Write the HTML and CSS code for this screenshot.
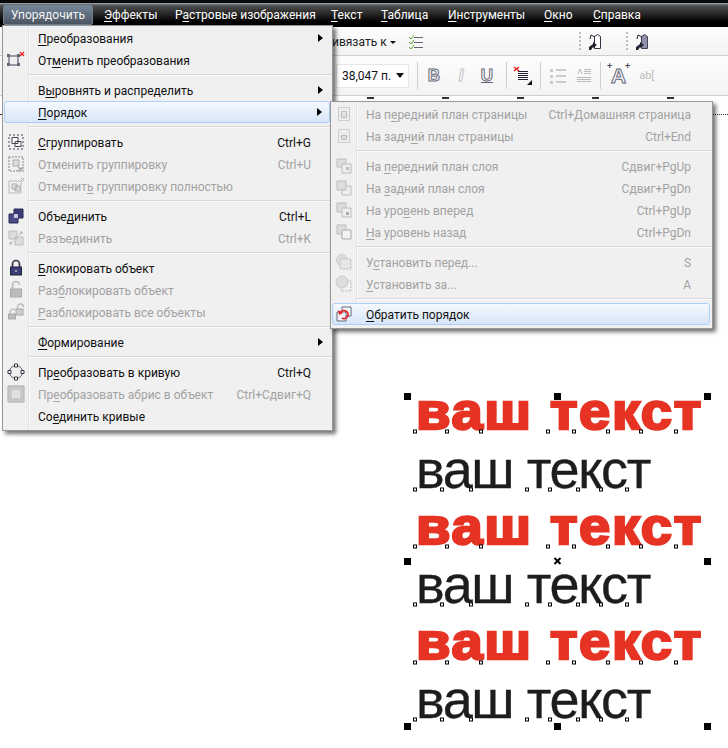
FILE: index.html
```html
<!DOCTYPE html>
<html lang="ru">
<head>
  <meta charset="UTF-8">
  <title>Упорядочить</title>
  <link rel="stylesheet" href="styles.css">
</head>
<body>
  <div class="page">
    <nav class="menubar">
      <span class="bar-item active">Упорядочить</span>
      <span class="bar-item effects"><u>Э</u>ффекты</span>
      <span class="bar-item bitmaps">Р<u>а</u>стровые изображения</span>
      <span class="bar-item text"><u>Т</u>екст</span>
      <span class="bar-item table"><u>Т</u>аблица</span>
      <span class="bar-item tools"><u>И</u>нструменты</span>
      <span class="bar-item window"><u>О</u>кно</span>
      <span class="bar-item help"><u>С</u>правка</span>
    </nav>

    <div class="toolbar top">
      <span class="snap">ивязать к</span>
      <span class="drop small"></span>
      <svg class="check-ico" width="16" height="16" viewBox="0 0 16 16"><path d="M6 3.500h9M6 8.500h9M6 13.500h9" stroke="#667" fill="none"/><path d="M1 3l2 2 3-4M1 8l2 2 3-4M1 13l2 2 3-4" stroke="#5a3" fill="none"/></svg>
      <span class="dots first"></span>
      <svg class="tag-ico" width="16" height="18" viewBox="0 0 16 18"><path d="M6.500 3.500l3-2 3 2v12h-6z" fill="#fff" stroke="#334"/><path d="M1 17v-3l4-3V9l4 3-4 3v-1l-2 3z" fill="#223"/><path d="M2 6l1-4 4 2" fill="none" stroke="#223"/></svg>
      <span class="dots"></span>
      <svg class="tag-ico" width="16" height="18" viewBox="0 0 16 18"><path d="M6.500 3.500l3-2 3 2v12h-6z" fill="#8f8fa8" stroke="#445"/><path d="M1 17v-3l4-3V9l4 3-4 3v-1l-2 3z" fill="#223"/><path d="M2 6l1-4 4 2" fill="none" stroke="#223"/></svg>
    </div>

    <div class="toolbar second">
      <div class="size-box"><span>38,047 п.</span><span class="drop"></span></div>
      <span class="tb-sep"></span>
      <span class="style-btn">B</span>
      <span class="style-btn off slant">I</span>
      <span class="style-btn under">U</span>
      <span class="tb-sep"></span>
      <svg class="align-ico" width="20" height="20" viewBox="0 0 20 20"><path d="M5 5.500h10M5 7.500h10M5 9.500h10M5 11.500h10M5 13.500h10" stroke="#223"/><path d="M1 1l5 4M6 1L1 5" stroke="#e22" stroke-width="1.600"/><path d="M19 19h-5l5-5z" fill="#111"/></svg>
      <span class="tb-sep"></span>
      <svg class="list-ico" width="18" height="16" viewBox="0 0 18 16"><path d="M7 2h10M7 8h10M7 14h10" stroke="#ccc" stroke-width="2"/><path d="M1 1h3v3H1zM1 7h3v3H1zM1 13h3v3H1z" fill="#ccc"/></svg>
      <svg class="list-ico next" width="14" height="16" viewBox="0 0 14 16"><path d="M0 9.500h14M0 11.500h14M0 13.500h14M7 1.500h7M7 3.500h7M7 5.500h7" stroke="#bbb"/><path d="M1 6l2-5 2 5" fill="none" stroke="#bbb"/></svg>
      <span class="tb-sep"></span>
      <span class="big-a">A</span>
      <span class="ab-tool">ab[</span>
    </div>

    <div class="ruler">
      <i></i><i></i><i></i><i></i><i></i>
    </div>

    <main class="canvas">
      <p class="line heavy">ваш текст</p>
      <p class="line thin">ваш текст</p>
      <p class="line heavy">ваш текст</p>
      <p class="line thin">ваш текст</p>
      <p class="line heavy">ваш текст</p>
      <p class="line thin">ваш текст</p>

      <svg class="handles" width="728" height="633" viewBox="0 115 728 633">
        <defs>
          <rect id="h" x="-3.500" y="-3.500" width="7" height="7" fill="#000"/>
          <rect id="n" x="-1.500" y="-1.500" width="3" height="3" fill="#fff" stroke="#000"/>
          <g id="nodes-heavy">
            <use href="#n" x="415"/><use href="#n" x="447"/><use href="#n" x="481"/><use href="#n" x="548"/>
            <use href="#n" x="574"/><use href="#n" x="608"/><use href="#n" x="641"/><use href="#n" x="676"/>
          </g>
          <g id="nodes-thin">
            <use href="#n" x="415"/><use href="#n" x="442"/><use href="#n" x="471"/><use href="#n" x="527"/>
            <use href="#n" x="550"/><use href="#n" x="578"/><use href="#n" x="601"/><use href="#n" x="627"/>
          </g>
        </defs>
        <use href="#h" x="407.500" y="396.500"/><use href="#h" x="557.500" y="396.500"/><use href="#h" x="707.500" y="396.500"/>
        <use href="#h" x="407.500" y="561.500"/><use href="#h" x="707.500" y="561.500"/>
        <use href="#h" x="407.500" y="726.500"/><use href="#h" x="557.500" y="726.500"/><use href="#h" x="707.500" y="726.500"/>
        <path d="M554.500 558l6 6M560.500 558l-6 6" stroke="#000" stroke-width="2"/>
        <use href="#nodes-heavy" y="431.500"/>
        <use href="#nodes-thin" y="489.500"/>
        <use href="#nodes-heavy" y="546.500"/>
        <use href="#nodes-thin" y="604.500"/>
        <use href="#nodes-heavy" y="662.500"/>
        <use href="#nodes-thin" y="719.500"/>
      </svg>
    </main>

    <!-- main menu -->
    <div class="menu main-menu">
      <div class="row"><span class="gutter"></span><span class="label"><u>П</u>реобразования</span><span class="arrow"></span></div>
      <div class="row"><span class="gutter">
        <svg width="20" height="18" viewBox="0 0 20 18"><path d="M3 5h9M3 14h9M3 5v9M12 5v9" stroke="#445" fill="none"/><path d="M1 3h3v3H1zM11 12h3v3h-3zM1 12h3v3H1zM11 3h3v3h-3z" fill="#667"/><path d="M14 1l4 4M18 1l-4 4" stroke="#e22" stroke-width="1.300"/></svg>
      </span><span class="label">От<u>м</u>енить преобразования</span></div>
      <div class="sep"></div>
      <div class="row"><span class="gutter"></span><span class="label">В<u>ы</u>ровнять и распределить</span><span class="arrow"></span></div>
      <div class="row hot"><span class="gutter"></span><span class="label"><u>П</u>орядок</span><span class="arrow"></span></div>
      <div class="sep"></div>
      <div class="row"><span class="gutter">
        <svg width="18" height="18" viewBox="0 0 18 18"><path d="M2 2h14v14H2z" fill="none" stroke="#445" stroke-dasharray="2 2"/><path d="M5 4.500h6v6H5zM8 8.500h6v5H8z" fill="#fff" stroke="#445"/></svg>
      </span><span class="label"><u>С</u>группировать</span><span class="short">Ctrl+G</span></div>
      <div class="row off"><span class="gutter">
        <svg width="18" height="18" viewBox="0 0 18 18"><path d="M2 2h14v14H2z" fill="none" stroke="#aaa" stroke-width="1.500" stroke-dasharray="2 1"/><path d="M6 5h6v6H6z" fill="#ddd" stroke="#aaa"/><path d="M11 12l5 4M16 12l-5 4" stroke="#aaa" stroke-width="1.500"/></svg>
      </span><span class="label">О<u>т</u>менить группировку</span><span class="short">Ctrl+U</span></div>
      <div class="row off"><span class="gutter">
        <svg width="18" height="18" viewBox="0 0 18 18"><path d="M2 4h12v12H2z" fill="none" stroke="#bbb"/><path d="M5 7h5v5H5zM8 9h5v5H8z" fill="#e4e4e4" stroke="#aaa"/><path d="M14 1l3 3M17 1l-3 3" stroke="#aaa"/></svg>
      </span><span class="label">Отменит<u>ь</u> группировку полностью</span></div>
      <div class="sep"></div>
      <div class="row"><span class="gutter">
        <svg width="18" height="18" viewBox="0 0 18 18"><path d="M7 2h9v9H7z" fill="#3c3c78" stroke="#2a2a55"/><path d="M2 7h9v9H2z" fill="#4a4a88" stroke="#2a2a55"/><path d="M7 7h4v4H7z" fill="#c8c8e0"/></svg>
      </span><span class="label">Объе<u>д</u>инить</span><span class="short">Ctrl+L</span></div>
      <div class="row off"><span class="gutter">
        <svg width="18" height="18" viewBox="0 0 18 18"><path d="M2 2h8v8H2zM8 8h8v8H8z" fill="#ddd" stroke="#bbb"/><path d="M12 6l3-3M13 3h2v2M6 12l-3 3M3 13v2h2" fill="none" stroke="#aaa"/></svg>
      </span><span class="label">Разъединить</span><span class="short">Ctrl+K</span></div>
      <div class="sep"></div>
      <div class="row"><span class="gutter">
        <svg width="16" height="18" viewBox="0 0 16 18"><path d="M4.500 8V5a3.500 3.500 0 0 1 7 0v3" fill="none" stroke="#334" stroke-width="1.700"/><rect x="2.500" y="8" width="11" height="8" fill="#3c3c78" stroke="#223"/><path d="M7 11h2v2H7z" fill="#99a"/></svg>
      </span><span class="label"><u>Б</u>локировать объект</span></div>
      <div class="row off"><span class="gutter">
        <svg width="16" height="18" viewBox="0 0 16 18"><path d="M4.500 8V4a3.500 3.500 0 0 1 7 0" fill="none" stroke="#bbb" stroke-width="1.700"/><rect x="2.500" y="8" width="11" height="8" fill="#bbb" stroke="#aaa"/></svg>
      </span><span class="label">Раз<u>б</u>локировать объект</span></div>
      <div class="row off"><span class="gutter">
        <svg width="18" height="18" viewBox="0 0 18 18"><path d="M10.500 6V4a3 3 0 0 1 6 0" fill="none" stroke="#bbb" stroke-width="1.300"/><rect x="9" y="6" width="7" height="6" fill="#ccc" stroke="#aaa"/><path d="M3 11V9a3 3 0 0 1 5-2" fill="none" stroke="#bbb" stroke-width="1.300"/><rect x="1.500" y="11" width="7" height="5" fill="#bbb" stroke="#aaa"/></svg>
      </span><span class="label"><u>Р</u>азблокировать все объекты</span></div>
      <div class="sep"></div>
      <div class="row"><span class="gutter"></span><span class="label"><u>Ф</u>ормирование</span><span class="arrow"></span></div>
      <div class="sep"></div>
      <div class="row"><span class="gutter">
        <svg width="18" height="18" viewBox="0 0 18 18"><circle cx="9" cy="9" r="6.500" fill="none" stroke="#556"/><path d="M7.500 1h3v3h-3zM7.500 14h3v3h-3zM1 7.500h3v3H1zM14 7.500h3v3h-3z" fill="#fff" stroke="#334"/></svg>
      </span><span class="label">Пр<u>е</u>образовать в кривую</span><span class="short">Ctrl+Q</span></div>
      <div class="row off"><span class="gutter">
        <svg width="18" height="18" viewBox="0 0 18 18"><path d="M1 1h16v16H1z" fill="#ccc" stroke="#aaa"/><path d="M4 4h10v10H4z" fill="#e0e0e0" stroke="#bbb"/></svg>
      </span><span class="label">Пр<u>е</u>образовать абрис в объект</span><span class="short">Ctrl+Сдвиг+Q</span></div>
      <div class="row"><span class="gutter"></span><span class="label">Со<u>е</u>динить кривые</span></div>
    </div>

    <!-- Порядок submenu -->
    <div class="menu sub-menu">
      <div class="row off"><span class="gutter">
        <svg width="14" height="16" viewBox="0 0 14 16"><path d="M1.500 1.500h11v13h-11z" fill="#eee" stroke="#ccc"/><path d="M4.500 5.500h5v6h-5z" fill="#e4e4e4" stroke="#bbb"/></svg>
      </span><span class="label">На п<u>е</u>редний план страницы</span><span class="short">Ctrl+Домашняя страница</span></div>
      <div class="row off"><span class="gutter">
        <svg width="14" height="16" viewBox="0 0 14 16"><path d="M1.500 1.500h11v13h-11z" fill="#eee" stroke="#ccc"/><path d="M4.500 7.500h5v4h-5z" fill="#ddd" stroke="#bbb"/></svg>
      </span><span class="label">На задн<u>и</u>й план страницы</span><span class="short">Ctrl+End</span></div>
      <div class="sep"></div>
      <div class="row off"><span class="gutter">
        <svg width="16" height="16" viewBox="0 0 16 16"><path d="M1 1h9v8H1z" fill="#ddd" stroke="#bbb"/><path d="M6 6h9v9H6z" fill="#eee" stroke="#bbb"/><path d="M10 9h3v3h-3z" fill="#bbb"/></svg>
      </span><span class="label">На <u>п</u>ередний план слоя</span><span class="short">Сдвиг+PgUp</span></div>
      <div class="row off"><span class="gutter">
        <svg width="16" height="16" viewBox="0 0 16 16"><path d="M6 6h9v9H6z" fill="#eee" stroke="#bbb"/><path d="M1 1h9v9H1z" fill="#ddd" stroke="#bbb"/></svg>
      </span><span class="label">На <u>з</u>адний план слоя</span><span class="short">Сдвиг+PgDn</span></div>
      <div class="row off"><span class="gutter">
        <svg width="16" height="16" viewBox="0 0 16 16"><path d="M1 1h9v9H1z" fill="#ddd" stroke="#bbb"/><path d="M6 6h9v9H6z" fill="#eee" stroke="#bbb"/><path d="M10 10h3v3h-3z" fill="#aaa"/></svg>
      </span><span class="label">На уро<u>в</u>ень вперед</span><span class="short">Ctrl+PgUp</span></div>
      <div class="row off"><span class="gutter">
        <svg width="16" height="16" viewBox="0 0 16 16"><path d="M1 1h9v9H1z" fill="#ddd" stroke="#bbb"/><path d="M6 6h9v9H6z" fill="#f2f2f2" stroke="#aaa"/></svg>
      </span><span class="label"><u>Н</u>а уровень назад</span><span class="short">Ctrl+PgDn</span></div>
      <div class="sep"></div>
      <div class="row off"><span class="gutter">
        <svg width="18" height="18" viewBox="0 0 18 18"><circle cx="7" cy="7" r="5.500" fill="#ddd" stroke="#ccc"/><path d="M5 6h11v10H5z" fill="#e6e6e6" stroke="#bbb" stroke-dasharray="2 1"/></svg>
      </span><span class="label">У<u>с</u>тановить перед...</span><span class="short">S</span></div>
      <div class="row off"><span class="gutter">
        <svg width="18" height="18" viewBox="0 0 18 18"><path d="M6 6h10v10H6z" fill="none" stroke="#bbb" stroke-dasharray="2 1"/><circle cx="7" cy="7" r="6" fill="#ddd" stroke="#ccc"/></svg>
      </span><span class="label"><u>У</u>становить за...</span><span class="short">A</span></div>
      <div class="sep"></div>
      <div class="row hot"><span class="gutter">
        <svg width="18" height="18" viewBox="0 0 18 18"><path d="M7 2h9v9H7z" fill="#f4f7fb" stroke="#667"/><path d="M2 7h9v9H2z" fill="#eef2f8" stroke="#667"/><path d="M6 7a4 4 0 1 1 1 6" fill="none" stroke="#e22" stroke-width="1.800"/><path d="M3 5l1 5 4-2z" fill="#e22"/></svg>
      </span><span class="label"><u>О</u>братить порядок</span></div>
    </div>
  </div>
</body>
</html>
```

FILE: styles.css
```css
* {
  box-sizing: border-box;
}

body {
  margin: 0;
  background: #fff;
  font-family: Roboto, "Open Sans", "Liberation Sans", sans-serif;
  font-size: 12px;
}

.page {
  position: relative;
  width: 728px;
  height: 748px;
  overflow: hidden;
}

u {
  text-underline-offset: 2px;
}

/* menu bar */
.menubar {
  display: flex;
  height: 27px;
  padding: 5px 0 2px 3px;
  color: #fff;
  background: linear-gradient(#0a0a0a 0, #0a0a0a 3px, #9fb0ba 3px, #7b8085 4px, #4c4c4c 6px, #000 22px);
}

.bar-item {
  line-height: 20px;
  white-space: nowrap;
}

.bar-item.active {
  width: 90px;
  text-align: center;
  border: 1px solid #6f7f8c;
  border-radius: 2px;
  line-height: 18px;
  color: #f4f4f4;
  background: linear-gradient(#75879a, #4a5561);
}

.effects { margin-left: 11px; width: 71px; }
.bitmaps { width: 156px; }
.text { width: 50px; }
.table { width: 67px; }
.tools { width: 96px; }
.window { width: 49px; }

/* toolbars */
.toolbar {
  display: flex;
  align-items: center;
  background: linear-gradient(#fdfdfd, #f3f3f3);
  border-bottom: 1px solid #cfcfcf;
}

.toolbar.top {
  height: 29px;
  padding-left: 332px;
  padding-top: 2px;
}

.toolbar.second {
  height: 40px;
  padding-left: 336px;
}

.snap {
  flex: none;
  color: #222;
  width: 52px;
  white-space: nowrap;
}

.drop {
  display: inline-block;
  border: 4px solid transparent;
  border-top: 5px solid #111;
  border-bottom: 0;
  margin-left: 5px;
}

.drop.small {
  border-width: 3px 3px 0;
  margin-left: 6px;
}

.check-ico { margin-left: 12px; }

.dots {
  width: 2px;
  height: 20px;
  margin-left: 22px;
  margin-right: 7px;
  background: repeating-linear-gradient(#bbb 0 2px, transparent 2px 4px);
}

.dots.first { margin-left: 155px; }

.size-box {
  display: flex;
  align-items: center;
  justify-content: space-between;
  width: 73px;
  height: 24px;
  padding: 0 4px 0 5px;
  background: #fff;
  border: 1px solid #e6e6e6;
  color: #111;
  white-space: nowrap;
}

.tb-sep {
  width: 1px;
  height: 27px;
  background: #cfcfcf;
}

.size-box + .tb-sep { margin-left: 8px; }

.style-btn {
  width: 14px;
  margin-left: 9px;
  margin-right: 3px;
  font: bold 17px "Liberation Sans", sans-serif;
  text-align: center;
  color: #fff;
  -webkit-text-stroke: 1px #667;
}

.style-btn:first-of-type { margin-left: 9px; }
.style-btn.off { -webkit-text-stroke-color: #c4c4c4; margin-left: 10px; font-style: italic; }
.style-btn.under { margin-left: 9px; text-decoration: underline #667; }
.style-btn + .tb-sep { margin-left: 9px; }

.align-ico { margin: 0 7px 0 6px; }
.list-ico { margin-left: 8px; }
.list-ico.next { margin-left: 10px; margin-right: 9px; }

.big-a {
  position: relative;
  margin-left: 10px;
  font: bold 21px "Liberation Sans", sans-serif;
  color: #fff;
  -webkit-text-stroke: 1px #667;
}

/* little size ticks either side of the A */
.big-a::before,
.big-a::after {
  content: "+";
  position: absolute;
  top: -3px;
  font-size: 9px;
  color: #445;
  -webkit-text-stroke: 0;
}

.big-a::before { left: -4px; }
.big-a::after { right: -4px; }

.ab-tool {
  margin-left: 13px;
  color: #bbb;
  font-size: 11px;
}

.ruler {
  display: flex;
  height: 19px;
  gap: 68px;
  padding-left: 367px;
  border-bottom: 1px dotted #333;
}

.ruler i {
  width: 7px;
  height: 2px;
  margin-top: 1px;
  background: #333;
}

/* canvas */
.canvas {
  position: relative;
  height: 633px;
  padding-top: 268px;
  padding-left: 416px;
}

.line {
  margin: 0;
  height: 57.6px;
  font: 54px/57.6px "Liberation Sans", sans-serif;
  white-space: nowrap;
}

.line.heavy {
  color: #e63323;
  font-size: 52px;
  font-weight: bold;
  -webkit-text-stroke: 2.4px #e63323;
  letter-spacing: 1.5px;
  transform: scaleX(1.08);
  transform-origin: left;
}

.line.thin {
  color: #1d1d1b;
  letter-spacing: -1.4px;
  -webkit-text-stroke: 0.3px #1d1d1b;
}

.handles {
  position: absolute;
  left: 0;
  top: 0;
}

/* dropdown menus */
.menu {
  position: absolute;
  background: linear-gradient(90deg, #f0f0f0 25px, #e2e2e2 25px, #e2e2e2 26px, #fbfbfb 26px, #fbfbfb 27px, #f0f0f0 27px);
  border: 1px solid #979797;
  box-shadow: 3px 3px 4px rgba(0, 0, 0, 0.55);
  color: #111;
}

.main-menu {
  left: 2px;
  top: 25px;
  width: 331px;
  height: 406px;
  padding-top: 1px;
}

.sub-menu {
  left: 330px;
  top: 101px;
  width: 383px;
  height: 228px;
  padding-top: 1px;
}

.row {
  display: flex;
  align-items: center;
  height: 22px;
  margin: 0 2px 0 1px;
  white-space: nowrap;
}

.row.off {
  color: #a2a2a2;
}

.row.hot {
  border: 1px solid #aecff7;
  border-radius: 3px;
  background: linear-gradient(#f5f9fe, #d6e6f8);
}

.gutter {
  display: flex;
  align-items: center;
  justify-content: center;
  flex: none;
  width: 24px;
  height: 20px;
  margin-right: 10px;
}

.row.hot .gutter {
  margin-left: -1px;
}

.label {
  flex: 1;
  padding-top: 1px;
}

.short {
  margin-right: 19px;
  padding-top: 1px;
}

.arrow {
  width: 0;
  height: 0;
  margin-right: 7px;
  border-left: 5px solid #000;
  border-top: 4px solid transparent;
  border-bottom: 4px solid transparent;
}

.sep {
  height: 8px;
  margin-left: 26px;
  background: linear-gradient(transparent 3px, #d8d8d8 3px, #d8d8d8 4px, #fbfbfb 4px, #fbfbfb 5px, transparent 5px);
}
```
